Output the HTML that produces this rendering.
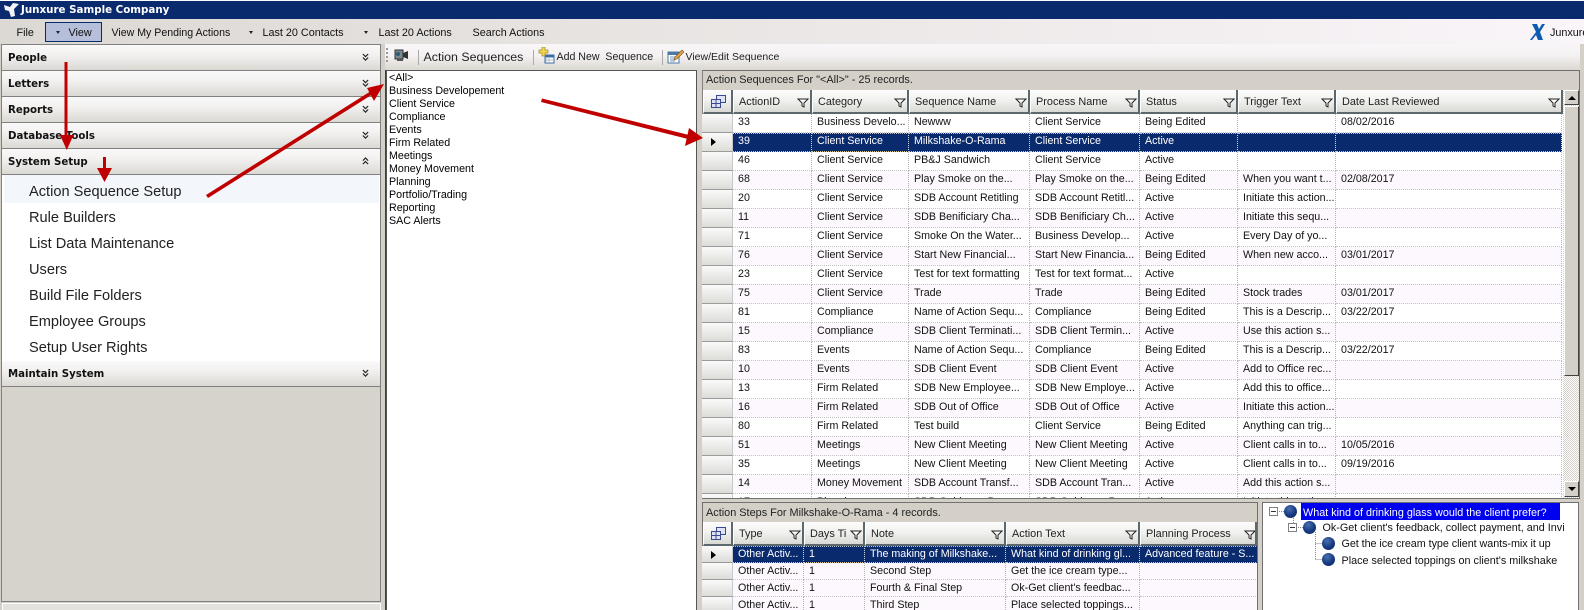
<!DOCTYPE html>
<html><head><meta charset="utf-8"><style>
*{box-sizing:border-box}
html,body{margin:0;padding:0}
body{width:1584px;height:610px;overflow:hidden;position:relative;background:#d4d0c8;font-family:"Liberation Sans",sans-serif;font-size:10.7px;color:#000}
.a{position:absolute;white-space:nowrap}
.m{top:26px;line-height:14px;font-size:10.8px;color:#111}
.tri{position:absolute;width:0;height:0;border-left:2.5px solid transparent;border-right:2.5px solid transparent;border-top:3px solid #222;top:31px}
.h{position:absolute;left:2px;width:378px;height:26px;background:linear-gradient(#faf9f9,#f2f1f0 40%,#dbd9d4);border-bottom:1px solid #808080;font:bold 10.2px/28px "DejaVu Sans",sans-serif;padding-left:6px;color:#111;overflow:hidden}
.h svg{position:absolute;left:360px;top:8px}
.it{position:absolute;left:29px;font-size:14.6px;line-height:18px;color:#222;white-space:nowrap}
.li{position:absolute;left:389px;line-height:13px;white-space:nowrap;font-size:10.7px}
.row{position:absolute;display:flex;left:0;height:19px}
.sel{width:31px;height:100%;flex:none;background:linear-gradient(#fafafa,#dcdcd8);border-bottom:1px solid #9a9a9a;border-right:1px solid #c8c8c8;position:relative}
.c{flex:none;height:100%;padding-left:5px;padding-top:1px;line-height:15px;overflow:hidden;white-space:nowrap;border-right:1px dotted #b4b4b4;border-bottom:1px dotted #c4c4c4;color:#111}
.p{background:#fdf8fd}
.w{background:#fff}
.s{background:#0a2a6e}
.s .c{color:#fff;background:#0a2a6e;padding-top:0;border-right-color:#d8d8d8;border-bottom:1px dotted #d8c890;border-top:1px dotted #b8c0d0}
.g1 .c:nth-child(2){width:79px}.g1 .c:nth-child(3){width:97px}.g1 .c:nth-child(4){width:121px}.g1 .c:nth-child(5){width:110px}.g1 .c:nth-child(6){width:98px}.g1 .c:nth-child(7){width:98px}.g1 .c:nth-child(8){width:226px}
.g2 .c:nth-child(2){width:71px}.g2 .c:nth-child(3){width:61px}.g2 .c:nth-child(4){width:141px}.g2 .c:nth-child(5){width:134px}.g2 .c:nth-child(6){width:118px}
.hd{position:absolute;height:24px;background:linear-gradient(#fdfdfd,#f0f0ee 50%,#d8d8d4);border-right:2px solid #5c686c;border-bottom:2px solid #5c686c;border-left:1px solid #fff;line-height:25px;padding-left:5px;font-size:10.9px;color:#222;white-space:nowrap;overflow:hidden}
.hd svg{position:absolute;right:1px;top:8px}
.ar{position:absolute;left:9px;width:0;height:0;border-top:4px solid transparent;border-bottom:4px solid transparent;border-left:5px solid #000}
.t{position:absolute;white-space:nowrap;font-size:10.8px;line-height:16px;color:#111}
.ball{position:absolute;width:13px;height:13px;border-radius:50%;background:radial-gradient(circle at 40% 30%,#4a70b0,#16397f 55%,#0a2560)}
.ex{position:absolute;width:9px;height:9px;border:1px solid #808080;background:#fff}
.ex:after{content:"";position:absolute;left:1px;top:3px;width:5px;height:1px;background:#333}
</style></head><body>
<div class="a" style="left:0;top:0;width:1584px;height:1px;background:#fff"></div>
<div class="a" style="left:0;top:1px;width:1584px;height:18px;background:#0a2a6e"></div>
<svg class="a" style="left:3px;top:2px" width="17" height="16" viewBox="0 0 17 16"><path d="M1 3l6 2 3-4 6 1-5 5 1 7-4 1-2-6-4-1z" fill="#f4f4f8"/></svg>
<div class="a" style="left:21px;top:2px;font:bold 10.3px/16px 'DejaVu Sans',sans-serif;color:#fff">Junxure Sample Company</div>

<div class="a" style="left:0;top:19px;width:1584px;height:25px;background:linear-gradient(90deg,#dcd8d3,#ebe7e6 50%,#f9f5f9)"></div>
<div class="a m" style="left:16.5px">File</div>
<div class="a" style="left:45px;top:22px;width:57px;height:20px;background:#b5bfd9;border:1px solid #0a2a6e"></div>
<div class="tri" style="left:56px"></div>
<div class="a m" style="left:68.5px">View</div>
<div class="a m" style="left:111.5px;font-size:10.6px">View My Pending Actions</div>
<div class="tri" style="left:249px"></div>
<div class="a m" style="left:262.5px">Last 20 Contacts</div>
<div class="tri" style="left:364px"></div>
<div class="a m" style="left:378.5px">Last 20 Actions</div>
<div class="a m" style="left:472.5px">Search Actions</div>
<svg class="a" style="left:1530px;top:23px" width="16" height="18" viewBox="0 0 16 18"><path d="M2 1h5l2 5 3-5h3l-5 8 3 8h-5l-2-5-4 5H0l6-8z" fill="#0c5cb0"/></svg>
<div class="a m" style="left:1550px;color:#111">Junxure</div>

<!-- left panel -->
<div class="a" style="left:1px;top:44px;width:380px;height:558px;border:1px solid #808080;background:#d6d3cd"></div>
<div class="a" style="left:2px;top:174px;width:378px;height:188px;background:#fff"></div>
<div class="a" style="left:4px;top:175px;width:375px;height:28px;background:#f3f7fc"></div>
<div class="h" style="top:45px">People<svg width="7" height="9" viewBox="0 0 8 10"><path d="M1 1l3 3 3-3M1 5l3 3 3-3" fill="none" stroke="#222" stroke-width="1.4"/></svg></div>
<div class="h" style="top:71px">Letters<svg width="7" height="9" viewBox="0 0 8 10"><path d="M1 1l3 3 3-3M1 5l3 3 3-3" fill="none" stroke="#222" stroke-width="1.4"/></svg></div>
<div class="h" style="top:97px">Reports<svg width="7" height="9" viewBox="0 0 8 10"><path d="M1 1l3 3 3-3M1 5l3 3 3-3" fill="none" stroke="#222" stroke-width="1.4"/></svg></div>
<div class="h" style="top:123px">Database Tools<svg width="7" height="9" viewBox="0 0 8 10"><path d="M1 1l3 3 3-3M1 5l3 3 3-3" fill="none" stroke="#222" stroke-width="1.4"/></svg></div>
<div class="h" style="top:149px">System Setup<svg width="7" height="9" viewBox="0 0 8 10"><path d="M1 4l3-3 3 3M1 8l3-3 3 3" fill="none" stroke="#222" stroke-width="1.4"/></svg></div>
<div class="it" style="top:183px">Action Sequence Setup</div>
<div class="it" style="top:209px">Rule Builders</div>
<div class="it" style="top:235px">List Data Maintenance</div>
<div class="it" style="top:261px">Users</div>
<div class="it" style="top:287px">Build File Folders</div>
<div class="it" style="top:313px">Employee Groups</div>
<div class="it" style="top:339px">Setup User Rights</div>
<div class="h" style="top:361px">Maintain System<svg width="7" height="9" viewBox="0 0 8 10"><path d="M1 1l3 3 3-3M1 5l3 3 3-3" fill="none" stroke="#222" stroke-width="1.4"/></svg></div>
<div class="a" style="left:2px;top:603px;width:379px;height:7px;background:#e4e2dc;border:1px solid #fff;border-bottom:0"></div>
<div class="a" style="left:385px;top:70px;width:1px;height:540px;background:#404040"></div>

<!-- toolbar -->
<div class="a" style="left:385px;top:44px;width:1195px;height:26px;background:linear-gradient(#f9f6f8,#f4f1f2 45%,#dbd8d1)"></div>
<div class="a" style="left:386px;top:48px;width:2px;height:16px;background:repeating-linear-gradient(#999 0 2px,transparent 2px 4px)"></div>
<svg class="a" style="left:394px;top:48px" width="15" height="14" viewBox="0 0 15 14"><rect x="1" y="2" width="8" height="9" fill="#7a8a90" stroke="#333"/><circle cx="4" cy="6" r="2" fill="#2a5a70"/><path d="M9 5l5-2v8l-5-2z" fill="#333"/><rect x="3" y="11" width="6" height="2" fill="#555"/></svg>
<div class="a" style="left:418px;top:50px;width:1px;height:15px;background:#aaa"></div>
<div class="a" style="left:423.5px;top:49px;font-size:12.4px;line-height:16px;color:#222">Action Sequences</div>
<div class="a" style="left:533px;top:50px;width:1px;height:15px;background:#aaa"></div>
<svg class="a" style="left:538px;top:47px" width="17" height="17" viewBox="0 0 17 17"><rect x="7" y="8" width="9" height="8" fill="#fff" stroke="#3a6ea8"/><rect x="7" y="8" width="9" height="2.5" fill="#3a6ea8"/><path d="M8 11v5M11 11v5M7 13h9" stroke="#9ab" stroke-width=".7"/><path d="M4 0h3v3h3v3H7v3H4V6H1V3h3z" fill="#f4d850" stroke="#a08830" stroke-width=".7"/></svg>
<div class="a" style="left:556.5px;top:48.5px;font-size:10.6px;line-height:16px;color:#222">Add New &nbsp;Sequence</div>
<div class="a" style="left:662px;top:50px;width:1px;height:15px;background:#aaa"></div>
<svg class="a" style="left:667px;top:49px" width="17" height="15" viewBox="0 0 17 15"><rect x="1" y="3" width="11" height="11" fill="#fff" stroke="#4a78a8"/><rect x="1" y="3" width="11" height="3" fill="#4a78a8"/><path d="M3 8h6M3 10h6M3 12h5" stroke="#7a9ab8"/><path d="M7 11l1-3 7-7 2 2-7 7z" fill="#e8a040" stroke="#705020" stroke-width=".6"/></svg>
<div class="a" style="left:685.5px;top:48.5px;font-size:10.5px;line-height:16px;color:#222">View/Edit Sequence</div>

<!-- list -->
<div class="a" style="left:386px;top:70px;width:311px;height:540px;background:#fff;border:1px solid #555;border-bottom:0"></div>
<div class="li" style="top:72px">&lt;All&gt;</div>
<div class="li" style="top:85px">Business Developement</div>
<div class="li" style="top:98px">Client Service</div>
<div class="li" style="top:111px">Compliance</div>
<div class="li" style="top:124px">Events</div>
<div class="li" style="top:137px">Firm Related</div>
<div class="li" style="top:150px">Meetings</div>
<div class="li" style="top:163px">Money Movement</div>
<div class="li" style="top:176px">Planning</div>
<div class="li" style="top:189px">Portfolio/Trading</div>
<div class="li" style="top:202px">Reporting</div>
<div class="li" style="top:215px">SAC Alerts</div>

<!-- main grid -->
<div class="a" style="left:702px;top:70px;width:878px;height:429px;background:#fff;border:1px solid #707070;border-left-color:#808080"></div>
<div class="a" style="left:703px;top:71px;width:876px;height:19px;background:#d4d0c8;line-height:19px;padding-left:3px;font-size:10.9px;color:#222">Action Sequences For "&lt;All&gt;" - 25 records.</div>
<div class="hd" style="left:703px;top:90px;width:30px"><svg style="left:7px;top:5px;right:auto" width="15" height="13" viewBox="0 0 15 13"><rect x="5.500" y=".5" width="9" height="7" fill="#dfe3f3" stroke="#3a4a90"/><rect x=".5" y="4.500" width="9" height="8" fill="#dfe3f3" stroke="#3a4a90"/><path d="M1 8.500h8M5 5v7" stroke="#3a4a90"/></svg></div>
<div class="hd" style="left:733px;top:90px;width:79px">ActionID<svg width="12" height="10" viewBox="0 0 12 10"><path d="M1 1h10L7 5v4L5 8V5z" fill="#fff" stroke="#222"/></svg></div>
<div class="hd" style="left:812px;top:90px;width:97px">Category<svg width="12" height="10" viewBox="0 0 12 10"><path d="M1 1h10L7 5v4L5 8V5z" fill="#fff" stroke="#222"/></svg></div>
<div class="hd" style="left:909px;top:90px;width:121px">Sequence Name<svg width="12" height="10" viewBox="0 0 12 10"><path d="M1 1h10L7 5v4L5 8V5z" fill="#fff" stroke="#222"/></svg></div>
<div class="hd" style="left:1030px;top:90px;width:110px">Process Name<svg width="12" height="10" viewBox="0 0 12 10"><path d="M1 1h10L7 5v4L5 8V5z" fill="#fff" stroke="#222"/></svg></div>
<div class="hd" style="left:1140px;top:90px;width:98px">Status<svg width="12" height="10" viewBox="0 0 12 10"><path d="M1 1h10L7 5v4L5 8V5z" fill="#fff" stroke="#222"/></svg></div>
<div class="hd" style="left:1238px;top:90px;width:98px">Trigger Text<svg width="12" height="10" viewBox="0 0 12 10"><path d="M1 1h10L7 5v4L5 8V5z" fill="#fff" stroke="#222"/></svg></div>
<div class="hd" style="left:1336px;top:90px;width:227px">Date Last Reviewed<svg width="12" height="10" viewBox="0 0 12 10"><path d="M1 1h10L7 5v4L5 8V5z" fill="#fff" stroke="#222"/></svg></div>

<div class="a g1" style="left:702px;top:114px;width:861px;height:384px;overflow:hidden">
<div class="row w" style="top:0"><div class="sel"></div><div class="c">33</div><div class="c">Business Develo...</div><div class="c">Newww</div><div class="c">Client Service</div><div class="c">Being Edited</div><div class="c"></div><div class="c">08/02/2016</div></div>
<div class="row s" style="top:19px"><div class="sel"><div class="ar" style="top:5px"></div></div><div class="c">39</div><div class="c">Client Service</div><div class="c">Milkshake-O-Rama</div><div class="c">Client Service</div><div class="c">Active</div><div class="c"></div><div class="c"></div></div>
<div class="row w" style="top:38px"><div class="sel"></div><div class="c">46</div><div class="c">Client Service</div><div class="c">PB&amp;J Sandwich</div><div class="c">Client Service</div><div class="c">Active</div><div class="c"></div><div class="c"></div></div>
<div class="row p" style="top:57px"><div class="sel"></div><div class="c">68</div><div class="c">Client Service</div><div class="c">Play Smoke on the...</div><div class="c">Play Smoke on the...</div><div class="c">Being Edited</div><div class="c">When you want t...</div><div class="c">02/08/2017</div></div>
<div class="row w" style="top:76px"><div class="sel"></div><div class="c">20</div><div class="c">Client Service</div><div class="c">SDB Account Retitling</div><div class="c">SDB Account Retitl...</div><div class="c">Active</div><div class="c">Initiate this action...</div><div class="c"></div></div>
<div class="row p" style="top:95px"><div class="sel"></div><div class="c">11</div><div class="c">Client Service</div><div class="c">SDB Benificiary Cha...</div><div class="c">SDB Benificiary Ch...</div><div class="c">Active</div><div class="c">Initiate this sequ...</div><div class="c"></div></div>
<div class="row w" style="top:114px"><div class="sel"></div><div class="c">71</div><div class="c">Client Service</div><div class="c">Smoke On the Water...</div><div class="c">Business Develop...</div><div class="c">Active</div><div class="c">Every Day of yo...</div><div class="c"></div></div>
<div class="row p" style="top:133px"><div class="sel"></div><div class="c">76</div><div class="c">Client Service</div><div class="c">Start New Financial...</div><div class="c">Start New Financia...</div><div class="c">Being Edited</div><div class="c">When new acco...</div><div class="c">03/01/2017</div></div>
<div class="row w" style="top:152px"><div class="sel"></div><div class="c">23</div><div class="c">Client Service</div><div class="c">Test for text formatting</div><div class="c">Test for text format...</div><div class="c">Active</div><div class="c"></div><div class="c"></div></div>
<div class="row p" style="top:171px"><div class="sel"></div><div class="c">75</div><div class="c">Client Service</div><div class="c">Trade</div><div class="c">Trade</div><div class="c">Being Edited</div><div class="c">Stock trades</div><div class="c">03/01/2017</div></div>
<div class="row w" style="top:190px"><div class="sel"></div><div class="c">81</div><div class="c">Compliance</div><div class="c">Name of Action Sequ...</div><div class="c">Compliance</div><div class="c">Being Edited</div><div class="c">This is a Descrip...</div><div class="c">03/22/2017</div></div>
<div class="row p" style="top:209px"><div class="sel"></div><div class="c">15</div><div class="c">Compliance</div><div class="c">SDB Client Terminati...</div><div class="c">SDB Client Termin...</div><div class="c">Active</div><div class="c">Use this action s...</div><div class="c"></div></div>
<div class="row w" style="top:228px"><div class="sel"></div><div class="c">83</div><div class="c">Events</div><div class="c">Name of Action Sequ...</div><div class="c">Compliance</div><div class="c">Being Edited</div><div class="c">This is a Descrip...</div><div class="c">03/22/2017</div></div>
<div class="row p" style="top:247px"><div class="sel"></div><div class="c">10</div><div class="c">Events</div><div class="c">SDB Client Event</div><div class="c">SDB Client Event</div><div class="c">Active</div><div class="c">Add to Office rec...</div><div class="c"></div></div>
<div class="row w" style="top:266px"><div class="sel"></div><div class="c">13</div><div class="c">Firm Related</div><div class="c">SDB New Employee...</div><div class="c">SDB New Employe...</div><div class="c">Active</div><div class="c">Add this to office...</div><div class="c"></div></div>
<div class="row p" style="top:285px"><div class="sel"></div><div class="c">16</div><div class="c">Firm Related</div><div class="c">SDB Out of Office</div><div class="c">SDB Out of Office</div><div class="c">Active</div><div class="c">Initiate this action...</div><div class="c"></div></div>
<div class="row w" style="top:304px"><div class="sel"></div><div class="c">80</div><div class="c">Firm Related</div><div class="c">Test build</div><div class="c">Client Service</div><div class="c">Being Edited</div><div class="c">Anything can trig...</div><div class="c"></div></div>
<div class="row p" style="top:323px"><div class="sel"></div><div class="c">51</div><div class="c">Meetings</div><div class="c">New Client Meeting</div><div class="c">New Client Meeting</div><div class="c">Active</div><div class="c">Client calls in to...</div><div class="c">10/05/2016</div></div>
<div class="row w" style="top:342px"><div class="sel"></div><div class="c">35</div><div class="c">Meetings</div><div class="c">New Client Meeting</div><div class="c">New Client Meeting</div><div class="c">Active</div><div class="c">Client calls in to...</div><div class="c">09/19/2016</div></div>
<div class="row p" style="top:361px"><div class="sel"></div><div class="c">14</div><div class="c">Money Movement</div><div class="c">SDB Account Transf...</div><div class="c">SDB Account Tran...</div><div class="c">Active</div><div class="c">Add this action s...</div><div class="c"></div></div>
<div class="row w" style="top:380px"><div class="sel"></div><div class="c">17</div><div class="c">Planning</div><div class="c">SDB Guidance Proc...</div><div class="c">SDB Guidance Proc...</div><div class="c">Active</div><div class="c">Initiate this action...</div><div class="c"></div></div>
</div>

<!-- scrollbar -->
<div class="a" style="left:1563px;top:90px;width:16px;height:408px;background:repeating-conic-gradient(#d4d0c8 0 25%,#fff 0 50%) 0 0/2px 2px"></div>
<div class="a" style="left:1564px;top:90px;width:15px;height:15px;background:#d4d0c8;border:1px solid #fff;border-right:1px solid #404040;border-bottom:1px solid #404040"></div>
<div class="a" style="left:1568px;top:96px;width:0;height:0;border-left:4px solid transparent;border-right:4px solid transparent;border-bottom:4px solid #000"></div>
<div class="a" style="left:1564px;top:106px;width:15px;height:270px;background:#d4d0c8;border:1px solid #fff;border-right:1px solid #404040;border-bottom:1px solid #404040"></div>
<div class="a" style="left:1564px;top:481px;width:15px;height:16px;background:#d4d0c8;border:1px solid #fff;border-right:1px solid #404040;border-bottom:1px solid #404040"></div>
<div class="a" style="left:1568px;top:487px;width:0;height:0;border-left:4px solid transparent;border-right:4px solid transparent;border-top:4px solid #000"></div>

<!-- lower grid -->
<div class="a" style="left:702px;top:502px;width:556px;height:108px;background:#fff;border:1px solid #707070;border-bottom:0"></div>
<div class="a" style="left:703px;top:503px;width:554px;height:19px;background:#d4d0c8;line-height:21px;padding-left:3px;font-size:10.9px;color:#222;overflow:hidden">Action Steps For Milkshake-O-Rama - 4 records.</div>
<div class="hd" style="left:703px;top:522px;width:30px"><svg style="left:7px;top:5px;right:auto" width="15" height="13" viewBox="0 0 15 13"><rect x="5.500" y=".5" width="9" height="7" fill="#dfe3f3" stroke="#3a4a90"/><rect x=".5" y="4.500" width="9" height="8" fill="#dfe3f3" stroke="#3a4a90"/><path d="M1 8.500h8M5 5v7" stroke="#3a4a90"/></svg></div>
<div class="hd" style="left:733px;top:522px;width:71px">Type<svg width="12" height="10" viewBox="0 0 12 10"><path d="M1 1h10L7 5v4L5 8V5z" fill="#fff" stroke="#222"/></svg></div>
<div class="hd" style="left:804px;top:522px;width:61px">Days Ti<svg width="12" height="10" viewBox="0 0 12 10"><path d="M1 1h10L7 5v4L5 8V5z" fill="#fff" stroke="#222"/></svg></div>
<div class="hd" style="left:865px;top:522px;width:141px">Note<svg width="12" height="10" viewBox="0 0 12 10"><path d="M1 1h10L7 5v4L5 8V5z" fill="#fff" stroke="#222"/></svg></div>
<div class="hd" style="left:1006px;top:522px;width:134px">Action Text<svg width="12" height="10" viewBox="0 0 12 10"><path d="M1 1h10L7 5v4L5 8V5z" fill="#fff" stroke="#222"/></svg></div>
<div class="hd" style="left:1140px;top:522px;width:117px">Planning Process<svg width="12" height="10" viewBox="0 0 12 10" style="right:-1px"><path d="M1 1h10L7 5v4L5 8V5z" fill="#fff" stroke="#222"/></svg></div>

<div class="a g2" style="left:702px;top:546px;width:555px;height:64px;overflow:hidden">
<div class="row s" style="top:0;height:17px"><div class="sel"><div class="ar" style="top:5px"></div></div><div class="c">Other Activ...</div><div class="c">1</div><div class="c">The making of Milkshake...</div><div class="c">What kind of drinking gl...</div><div class="c">Advanced feature - S...</div></div>
<div class="row p" style="top:17px;height:17px"><div class="sel"></div><div class="c">Other Activ...</div><div class="c">1</div><div class="c">Second Step</div><div class="c">Get the ice cream type...</div><div class="c"></div></div>
<div class="row p" style="top:34px;height:17px"><div class="sel"></div><div class="c">Other Activ...</div><div class="c">1</div><div class="c">Fourth &amp; Final Step</div><div class="c">Ok-Get client's feedbac...</div><div class="c"></div></div>
<div class="row p" style="top:51px;height:17px"><div class="sel"></div><div class="c">Other Activ...</div><div class="c">1</div><div class="c">Third Step</div><div class="c">Place selected toppings...</div><div class="c"></div></div>
</div>

<!-- tree -->
<div class="a" style="left:1262px;top:502px;width:317px;height:108px;background:#fff;border:1px solid #707070;border-bottom:0;overflow:hidden"></div>
<svg class="a" style="left:1262px;top:502px" width="110" height="70"><path d="M15 9.500h8M34 25.500h8M31.500 10v11M53.500 30v27M53.500 41.500h7M53.500 57.500h7" stroke="#888" stroke-dasharray="1 1" fill="none"/></svg>
<div class="ex" style="left:1269px;top:507px"></div>
<div class="ball" style="left:1284px;top:505px"></div>
<div class="a" style="left:1301px;top:503px;width:259px;height:17px;background:#0000f0"></div>
<div class="t" style="left:1303px;top:505px;color:#fff">What kind of drinking glass would the client prefer?</div>
<div class="ex" style="left:1288px;top:523px"></div>
<div class="ball" style="left:1303px;top:521px"></div>
<div class="t" style="left:1322.500px;top:520px;width:243px;overflow:hidden">Ok-Get client's feedback, collect payment, and Invi</div>
<div class="ball" style="left:1322px;top:537px"></div>
<div class="t" style="left:1341.500px;top:536px;letter-spacing:-.06px">Get the ice cream type client wants-mix it up</div>
<div class="ball" style="left:1322px;top:553px"></div>
<div class="t" style="left:1341.500px;top:553px">Place selected toppings on client's milkshake</div>

<!-- arrows -->
<svg class="a" style="left:0;top:0" width="1584" height="610" viewBox="0 0 1584 610">
<g fill="#c00000" stroke="none">
<rect x="64.500" y="62" width="3" height="75"/><path d="M60 135h13.500l-6.700 15z"/>
<rect x="103" y="157" width="3" height="12"/><path d="M97 168h15l-7.500 14z"/>
<path d="M206 195L371 91l2 3L208 198z"/><path d="M384 84l-17 4 7 13z"/>
<path d="M542 98.500L689 135l-1 4L541 102z"/><path d="M703 138l-14-10-4 18z"/>
</g></svg>
</body></html>
